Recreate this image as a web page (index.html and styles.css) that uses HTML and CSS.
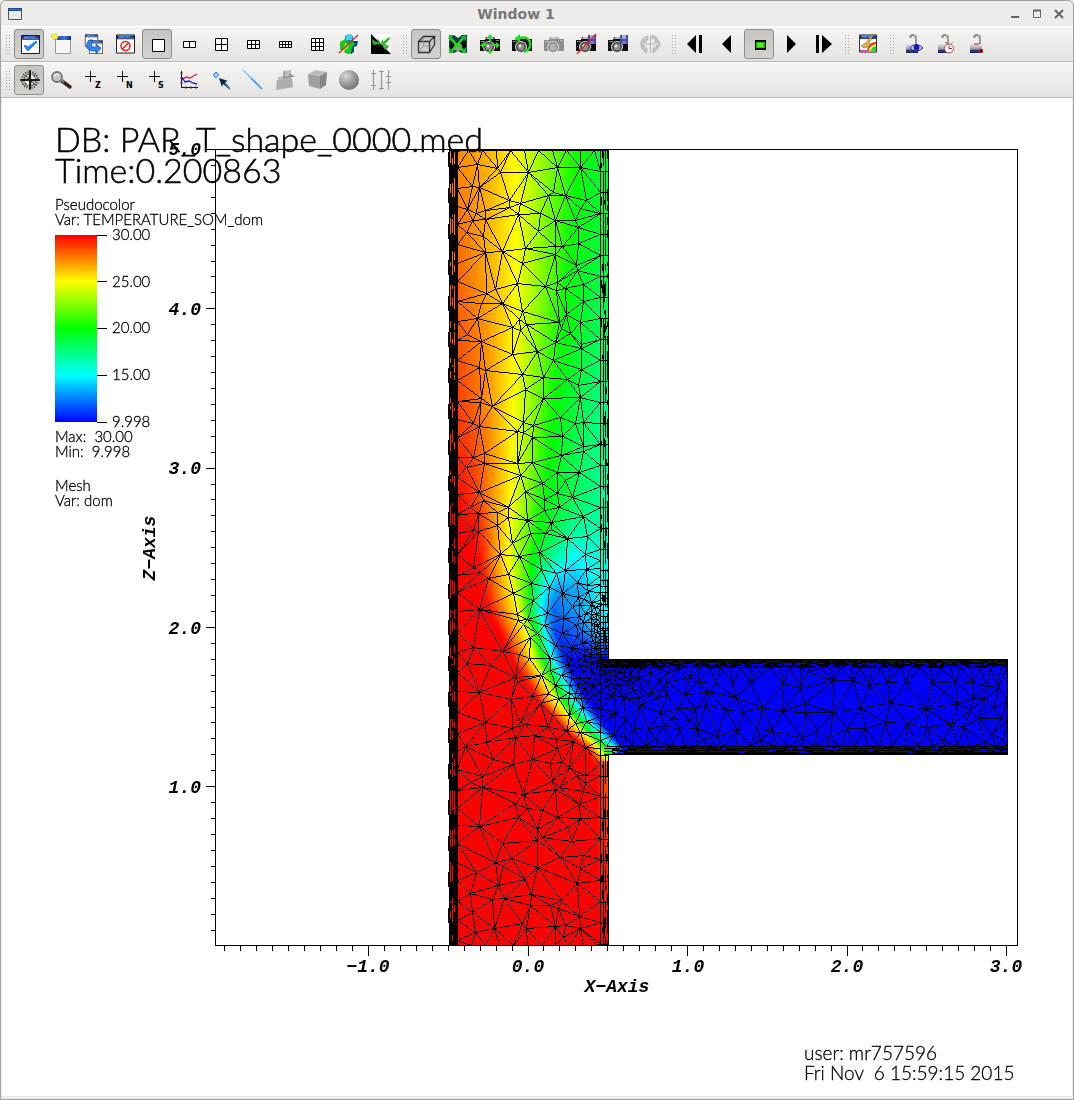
FILE: index.html
```html
<!DOCTYPE html>
<html lang="en">
<head>
<meta charset="utf-8">
<meta name="viewport" content="width=device-width, initial-scale=1">
<title>Window 1</title>
<link rel="stylesheet" href="styles.css">
</head>
<body>
<svg class="defs" aria-hidden="true">
  <defs>
    <linearGradient id="bar" x1="0" x2="1" y1="0" y2="0"><stop offset="0" stop-color="#0a2a8c"/><stop offset=".6" stop-color="#3a7af0"/><stop offset="1" stop-color="#0a2a8c"/></linearGradient>
    <radialGradient id="ball" cx=".35" cy=".3" r=".75"><stop offset="0" stop-color="#d8d8d8"/><stop offset=".5" stop-color="#a0a0a0"/><stop offset="1" stop-color="#707070"/></radialGradient>
    <linearGradient id="lockfill" x1="0" x2="0" y1="0" y2="1"><stop offset="0" stop-color="#e4e4e4"/><stop offset=".55" stop-color="#9a9aa6"/><stop offset=".7" stop-color="#2c3c86"/><stop offset="1" stop-color="#16246a"/></linearGradient>
    <linearGradient id="legend" x1="0" x2="0" y1="0" y2="1"><stop offset="0" stop-color="#f00"/><stop offset=".25" stop-color="#ff0"/><stop offset=".5" stop-color="#0f0"/><stop offset=".75" stop-color="#0ff"/><stop offset="1" stop-color="#00f"/></linearGradient>
    <symbol id="win" viewBox="0 0 20 20"><path d="M.5.5h19v19H.5z" fill="#fff" stroke="#111"/><path d="M1 1h18v3H1z" fill="url(#bar)"/><path d="M1 4.5h18" stroke="#222"/><path d="M3 2.5h5" stroke="#9ab8f8"/></symbol>
    <symbol id="camera" viewBox="0 0 24 24"><path d="M2 8h5l1-3h8l1 2h5v12H2z" fill="#0c0c0c"/><path d="M9 5h6l1 2H8z" fill="#bbb"/><path d="M3 9.500h4M18 8.500h3" stroke="#8a8a8a"/><circle cx="11" cy="15" r="6" fill="#ddd"/><circle cx="11" cy="15" r="5" fill="#444"/><circle cx="11" cy="15" r="3.500" fill="#8a8a8a"/><circle cx="10" cy="14" r="1.500" fill="#e8e8e8"/></symbol>
    <symbol id="graycam" viewBox="0 0 24 24"><path d="M2 8h5l1-3h8l1 2h5v12H2z" fill="#8f8f8f"/><path d="M9 5h6l1 2H8z" fill="#c4c4c4"/><path d="M3 9.500h4M18 8.500h3" stroke="#bdbdbd"/><circle cx="11" cy="15" r="6" fill="#ddd"/><circle cx="11" cy="15" r="5" fill="#8a8a8a"/><circle cx="11" cy="15" r="3.500" fill="#b4b4b4"/></symbol>
    <symbol id="disk" viewBox="0 0 8 9"><path d="M0 0h8v9H0z" fill="#4a4aa8"/><path d="M2 0h4v4H2z" fill="#a8a8e8"/><path d="M2 6h4v3H2z" fill="#7878c8"/></symbol>
    <symbol id="lock" viewBox="0 0 24 24"><path d="M5 12h12v9H5z" fill="url(#lockfill)"/><path d="M9 6c1-4 6-4 6 1v5" fill="none" stroke="#666" stroke-width="2"/><path d="M9 6c1-4 6-4 6 1v5" fill="none" stroke="#ccc"/></symbol>
    <symbol id="cross" viewBox="0 0 24 24"><path d="M9.500 3v11M4 8.500h11" stroke="#111" stroke-width="1" fill="none"/></symbol>
  </defs>
</svg>

<header class="titlebar">
  <svg class="app-icon" viewBox="0 0 14 12"><path d="M.5.5h13v11H.5z" fill="#e6eaea" stroke="#555"/><path d="M0 0h14v3H0z" fill="#204a87"/><path d="M1 1.500h12" stroke="#3d76c4"/></svg>
  <h1 class="title">Window 1</h1>
  <div class="window-controls">
    <button aria-label="Minimize"><svg viewBox="0 0 10 10"><path d="M1 8h8" stroke="#666" stroke-width="2"/></svg></button>
    <button aria-label="Maximize"><svg viewBox="0 0 10 10"><path d="M1.500 1.500h7v7h-7z" fill="none" stroke="#666"/><path d="M1 1.500h8" stroke="#666" stroke-width="2"/></svg></button>
    <button aria-label="Close"><svg viewBox="0 0 10 10"><path d="M1 1l8 8M9 1L1 9" stroke="#666" stroke-width="2"/></svg></button>
  </div>
</header>

<nav class="toolbar" aria-label="Window tools">
  <span class="grip"></span>
  <button class="tool on" aria-label="Active window"><svg viewBox="0 0 24 24"><use href="#win" x="4" y="2" width="19" height="21"/><path d="M7 14l4 5 9-9-1-1-8 6-3-2z" fill="#1f87ff" stroke="#1f87ff"/></svg></button>
  <button class="tool" aria-label="New window"><svg viewBox="0 0 24 24"><path d="M6.500 4.500h15v17h-15z" fill="#f6f6f6" stroke="#999"/><path d="M6 4h16v4H6z" fill="url(#bar)"/><path d="M3 2l2 1 2-2 1 3 2 1-2 1 0 2-2-1-2 1 0-2-2-1z" fill="#f2f230" stroke="#c8c83a" stroke-width=".5"/></svg></button>
  <button class="tool" aria-label="Clone window"><svg viewBox="0 0 24 24"><use href="#win" x="3" y="2" width="15" height="13"/><use href="#win" x="8" y="8" width="14" height="14"/><path d="M8 8c-5 6-2 12 7 11v3l5-6-5-4v3c-4 1-6-2-3-7z" fill="#2f86ea" stroke="#0a3c98" stroke-width=".7"/></svg></button>
  <button class="tool" aria-label="Delete window"><svg viewBox="0 0 24 24"><use href="#win" x="3" y="2" width="19" height="20"/><circle cx="12.500" cy="14" r="4.500" fill="none" stroke="#f01818" stroke-width="1.500"/><path d="M9.500 17l6-6" stroke="#f01818" stroke-width="1.500"/></svg></button>
  <button class="tool on" aria-label="Layout 1x1"><svg viewBox="0 0 24 24"><path d="M7.500 7.500h12v12h-12z" fill="#fff" stroke="#000"/></svg></button>
  <button class="tool" aria-label="Layout 1x2"><svg viewBox="0 0 24 24"><path d="M6.500 9.500h12v6h-12zM12.500 9v7" fill="#fff" stroke="#000"/></svg></button>
  <button class="tool" aria-label="Layout 2x2"><svg viewBox="0 0 24 24"><path d="M6.500 6.500h12v12h-12zM12.500 6v13M6 12.500h13" fill="#fff" stroke="#000"/></svg></button>
  <button class="tool" aria-label="Layout 2x3"><svg viewBox="0 0 24 24"><path d="M6.500 8.500h12v8h-12zM10.500 8v9M14.500 8v9M6 12.500h13" fill="#fff" stroke="#000"/></svg></button>
  <button class="tool" aria-label="Layout 2x4"><svg viewBox="0 0 24 24"><path d="M6.500 9.500h12v6h-12zM9.500 9v7M12.500 9v7M15.500 9v7M6 12.500h13" fill="#fff" stroke="#000"/></svg></button>
  <button class="tool" aria-label="Layout 3x3"><svg viewBox="0 0 24 24"><path d="M6.500 6.500h12v12h-12zM10.500 6v13M14.500 6v13M6 10.500h13M6 14.500h13" fill="#fff" stroke="#000"/></svg></button>
  <button class="tool" aria-label="Clear plots"><svg viewBox="0 0 24 24"><path d="M8 4q5-3 8 0v8H8z" fill="#1a8ad8"/><path d="M9 3q4-2 6 0v5H9z" fill="#3fd0ee"/><path d="M12 9h9l-1 5-3 1v5l-3 2-4-2z" fill="#084a80"/><path d="M3 10l5-3 3 3 4-1 3 3-3 3-1 6-4 1-3-2 1-3-5 1z" fill="#18c818"/><path d="M8 11l4 2-2 5-3-2z" fill="#6cf05c"/><path d="M2 21L21 3" stroke="#d82010" stroke-width="1.200"/></svg></button>
  <button class="tool" aria-label="Invert background"><svg viewBox="0 0 24 24"><path d="M2 2h20v20H2z" fill="#fff"/><path d="M2 2v20h20z" fill="#000"/><path d="M8 3v3l2 2 1 2-4 0-4-3 1 6 5-1 2 2-3-8zM20 5l-6 5v-3l-2 3 1 4 5 0-2-2 5-5zM14 15l6-2-1 3-3 2z" fill="#2cb81c"/></svg></button>
  <span class="grip"></span>
  <button class="tool on" aria-label="Perspective"><svg viewBox="0 0 24 24"><path d="M4.500 9.500h11v11h-11zM4.500 9.500l5-5h11l-5 5M20.500 4.500v8l-5 8" fill="none" stroke="#333" stroke-width="1.300"/><path d="M9.500 5v9h8M9.500 14l-5 6" fill="none" stroke="#888" stroke-width=".7"/></svg></button>
  <button class="tool" aria-label="Reset view"><svg viewBox="0 0 24 24"><path d="M3 3h5l4 3 4-3h5v18h-5l-4-2-4 2H3z" fill="#0e3f50"/><path d="M4 9h16v9H4z" fill="#111"/><circle cx="12" cy="15" r="4" fill="#999"/><path d="M3 5l8 8 8-9M4 21l7-8 8 7" fill="none" stroke="#20d820" stroke-width="2.500"/><path d="M3 3h5L3 9zM20 4h-5l5 5zM3 21v-6l5 6zM20 21h-5l5-6z" fill="#18b828"/></svg></button>
  <button class="tool" aria-label="Recenter view"><svg viewBox="0 0 24 24"><use href="#camera" width="24" height="24"/><path d="M12 2l3 4h-2v3h-2V6H9zM12 22l3-3h-2v-2h-2v2H9zM2 13l4-3v2h3v2H6v3zM22 13l-4-3v2h-4v2h4v3z" fill="#20e020"/></svg></button>
  <button class="tool" aria-label="Undo view"><svg viewBox="0 0 24 24"><use href="#camera" width="24" height="24"/><path d="M10 6c8-2 11 3 10 8-1 4-3 5-6 6" fill="none" stroke="#20d820" stroke-width="2.500"/><path d="M4 7l6-5v8z" fill="#20e020"/></svg></button>
  <button class="tool" aria-label="Redo view" disabled><svg viewBox="0 0 24 24"><use href="#graycam" width="24" height="24"/></svg></button>
  <button class="tool" aria-label="Remove saved views"><svg viewBox="0 0 24 24"><use href="#camera" width="24" height="24"/><use href="#disk" x="14" y="3" width="8" height="9"/><path d="M3 22L22 2" stroke="#e02020" stroke-width="1.300"/></svg></button>
  <button class="tool" aria-label="Save view"><svg viewBox="0 0 24 24"><use href="#camera" width="24" height="24"/><use href="#disk" x="14" y="3" width="8" height="9"/></svg></button>
  <button class="tool" aria-label="Choose centre of rotation" disabled><svg viewBox="0 0 24 24"><path d="M10 4C0 6 1 18 9 21v-5H7v-3H4v-2h4V8h2zM14 3c9 2 10 13 1 18v-5h3v-3h4v-2h-5V7h-3z" fill="#c2c2c2" stroke="#aaa" stroke-width=".6"/><path d="M12.500 3v18M8 12h9" stroke="#b4b4b4"/></svg></button>
  <span class="grip"></span>
  <button class="tool" aria-label="Previous frame"><svg viewBox="0 0 24 24"><path d="M13 3v18L4 12zM16 3h3v18h-3z"/></svg></button>
  <button class="tool" aria-label="Reverse play"><svg viewBox="0 0 24 24"><path d="M16 3v18L7 12z"/></svg></button>
  <button class="tool on" aria-label="Stop"><svg viewBox="0 0 24 24"><path d="M8 8h11v10H8z"/><path d="M9 10h9v6H9z" fill="#20c800"/><path d="M11 11h5v4h-5z" fill="#50ff20"/></svg></button>
  <button class="tool" aria-label="Play"><svg viewBox="0 0 24 24"><path d="M8 3v18l9-9z"/></svg></button>
  <button class="tool" aria-label="Next frame"><svg viewBox="0 0 24 24"><path d="M5 3h3v18H5zM11 3v18l10-9z"/></svg></button>
  <span class="grip"></span>
  <button class="tool" aria-label="Choose tool"><svg viewBox="0 0 24 24"><use href="#win" x="3" y="2" width="18" height="19"/><path d="M20 10c-5 0-8 3-9 9h2c0-4 3-6 7-7z" fill="#f03030"/><path d="M20 12c-4 1-7 3-7 7h2c0-3 2-4 5-5z" fill="#f0e820"/><path d="M20 14c-3 1-5 2-5 5h5z" fill="#20d850"/><path d="M4 18h7v2H4z" fill="#e040e0"/><path d="M16 2l1 1-4 8 1 3-6 2-3-2 6-4z" fill="#e0b850" stroke="#7a5a18" stroke-width=".6"/></svg></button>
  <span class="grip"></span>
  <button class="tool" aria-label="Lock view"><svg viewBox="0 0 24 24"><use href="#lock" width="24" height="24"/><path d="M9 16q6-7 13 0-7 6-13 0z" fill="#e8e8ff" stroke="#1818a0"/><circle cx="15.500" cy="15.500" r="3" fill="#1818b8"/></svg></button>
  <button class="tool" aria-label="Lock time"><svg viewBox="0 0 24 24"><use href="#lock" width="24" height="24"/><circle cx="16" cy="16.500" r="4.500" fill="#fff" stroke="#c04040"/><path d="M16 13.500v3h3M12.500 10.500l2 1M19.500 10.500l-1 1" stroke="#b02020" fill="none"/></svg></button>
  <button class="tool" aria-label="Lock tools"><svg viewBox="0 0 24 24"><use href="#lock" width="24" height="24"/><path d="M9 11h5v2H9z" fill="#e07080"/><path d="M14.500 17.500h3v3h-3z" fill="#400" stroke="#e01818"/></svg></button>
</nav>

<nav class="toolbar" aria-label="Interaction modes">
  <span class="grip"></span>
  <button class="tool on" aria-label="Navigate"><svg viewBox="0 0 24 24"><circle cx="13" cy="12" r="8" fill="none" stroke="#222" stroke-width="2" stroke-dasharray="1 1.500"/><circle cx="13" cy="12" r="6" fill="#d8d4c8" stroke="#444"/><path d="M13 2l1 9 9 1-9 1-1 9-1-9-9-1 9-1z" fill="#111" stroke="#111"/><path d="M8 7l10 10M18 7L8 17" stroke="#333" stroke-width=".8"/><path d="M14 6v5h5zM12 18v-5H7z" fill="#f0ece0"/></svg></button>
  <button class="tool" aria-label="Zoom"><svg viewBox="0 0 24 24"><path d="M13 13l8 6" stroke="#3a2420" stroke-width="3.500" stroke-linecap="round"/><path d="M12 12l3 2" stroke="#888" stroke-width="2"/><circle cx="8" cy="9" r="5" fill="#c8c8c8" stroke="#777" stroke-width="1.800"/><path d="M5 8q2-3 5-1" stroke="#fff" fill="none"/></svg></button>
  <button class="tool" aria-label="Zone pick"><svg viewBox="0 0 24 24"><use href="#cross" width="24" height="24"/><text class="glyph" x="14" y="20">Z</text></svg></button>
  <button class="tool" aria-label="Node pick"><svg viewBox="0 0 24 24"><use href="#cross" width="24" height="24"/><text class="glyph" x="13" y="20">N</text></svg></button>
  <button class="tool" aria-label="Spreadsheet pick"><svg viewBox="0 0 24 24"><use href="#cross" width="24" height="24"/><text class="glyph" x="13" y="20">S</text></svg></button>
  <button class="tool" aria-label="Lineout"><svg viewBox="0 0 24 24"><path d="M4.500 3v16.500H21" fill="none" stroke="#111"/><path d="M3 5h3M3 10h3M3 15h3M9 18v3M14 18v3M19 18v3" stroke="#555"/><path d="M5 12l4-3 4 1 7-4" fill="none" stroke="#e82030" stroke-width="1.300"/><path d="M5 9l3 5 4-1 4 2 4 1" fill="none" stroke="#1818d0" stroke-width="1.300"/></svg></button>
  <button class="tool" aria-label="Point tool"><svg viewBox="0 0 24 24"><path d="M7 4l3 3-3 3-3-3z" fill="#9cc8ff" stroke="#2a80e8"/><path d="M10 10l9 3-3 1 5 6-1 1-6-5-1 3z" fill="#0c2440"/><path d="M16 15l5 6" stroke="#3a90d8" stroke-width="1.500"/></svg></button>
  <button class="tool" aria-label="Line tool"><svg viewBox="0 0 24 24"><path d="M2 2l19 19" stroke="#8cc4ff" stroke-width="1.600"/><path d="M10 10l11 11" stroke="#48a0f0" stroke-width="1.600"/></svg></button>
  <button class="tool" aria-label="Plane tool" disabled><svg viewBox="0 0 24 24"><path d="M5 9l6-1V3l7-1v8l2 9-17 3z" fill="#bdbdbd"/><path d="M4 12l15-2 1 9-17 3z" fill="#aeaeae"/><path d="M11 3v7l9-2-4-2" fill="none" stroke="#8a8a8a" stroke-width="1.300"/></svg></button>
  <button class="tool" aria-label="Box tool" disabled><svg viewBox="0 0 24 24"><path d="M3 6l8-4 11 2-6 4z" fill="#bcbcbc"/><path d="M3 6l12 2v13L4 18z" fill="#a0a0a0"/><path d="M15 8l7-4-1 13-6 4z" fill="#868686"/></svg></button>
  <button class="tool" aria-label="Sphere tool" disabled><svg viewBox="0 0 24 24"><circle cx="12" cy="12" r="10" fill="url(#ball)"/></svg></button>
  <button class="tool" aria-label="Axis restriction tool" disabled><svg viewBox="0 0 24 24"><path d="M4.500 2v20M12.500 2v20M19.500 2v20M2 5.500h5M10 3.500h5M17 8.500h5M2 17.500h5M10 20.500h5M17 14.500h5" stroke="#999" stroke-width="1.200"/></svg></button>
</nav>

<main class="viewport">
  <canvas class="layer field" id="field" width="1070" height="998"></canvas>
  <svg class="layer" viewBox="2 98 1070 998" role="img" aria-label="Temperature plot of the T-shaped pipe">
    <path class="axis" d="M215.500 149.500H1017.500V945.500H215.500z"/>
    <path class="axis" id="ticks"/>
    <g class="axis-label end">
      <text x="201" y="155">5.0</text><text x="201" y="315">4.0</text><text x="201" y="474">3.0</text><text x="201" y="634">2.0</text><text x="201" y="793">1.0</text>
    </g>
    <g class="axis-label mid">
      <text x="368" y="972">−1.0</text><text x="528" y="972">0.0</text><text x="688" y="972">1.0</text><text x="847" y="972">2.0</text><text x="1006" y="972">3.0</text>
      <text x="617" y="992">X−Axis</text>
      <text transform="translate(155 548) rotate(-90)">Z−Axis</text>
    </g>
    <g class="heading"><text x="55" y="152">DB: PAR_T_shape_0000.med</text><text x="55" y="183">Time:0.200863</text></g>
    <g class="note">
      <text x="55" y="210">Pseudocolor</text><text x="55" y="225">Var: TEMPERATURE_SOM_dom</text>
      <text x="112" y="240">30.00</text><text x="112" y="287">25.00</text><text x="112" y="333">20.00</text><text x="112" y="380">15.00</text><text x="112" y="427">9.998</text>
      <text x="55" y="442">Max:  30.00</text><text x="55" y="457">Min:  9.998</text>
      <text x="55" y="491">Mesh</text><text x="55" y="506">Var: dom</text>
    </g>
    <rect x="55" y="235" width="42" height="187" fill="url(#legend)"/>
    <path class="axis" d="M97 235.500h10M97 281.500h10M97 328.500h10M97 375.500h10M97 422.500h10"/>
    <g class="credit"><text x="804" y="1060">user: mr757596</text><text x="804" y="1080">Fri Nov  6 15:59:15 2015</text></g>
  </svg>
</main>
<script src="plot.js"></script>
</body>
</html>
```

FILE: styles.css
```css
* { box-sizing: border-box; }
html { background: #edeceb; }
body {
  margin: 0;
  min-height: 100vh;
  display: flex;
  flex-direction: column;
  border: 1px solid #a3a19e;
  border-radius: 6px 6px 0 0;
  background: #edeceb;
  font-family: "DejaVu Sans", sans-serif;
}
.defs { position: absolute; width: 0; height: 0; }
button { padding: 0; border: 0; background: none; font: inherit; }
svg { display: block; }

.titlebar {
  display: flex;
  align-items: center;
  height: 25px;
  padding: 0 9px 0 7px;
}
.app-icon { width: 14px; height: 12px; }
.title { flex: 1; margin: 0; color: #777; font-size: 14px; line-height: 16px; font-weight: bold; text-align: center; }
.window-controls { display: flex; gap: 12px; }
.window-controls svg { width: 10px; height: 10px; }

.toolbar {
  display: flex;
  gap: 2px;
  height: 36px;
  padding: 3px 0;
  border-top: 1px solid #fff;
  border-bottom: 1px solid #bbb9b6;
  background: linear-gradient(#f5f5f4, #e4e3e1);
  align-items: center;
}
.grip {
  flex: none;
  width: 11px;
  height: 19px;
  padding: 0 1px 0 5px;
  background: conic-gradient(from 270deg at 1px 1px, #a8a6a2 90deg, transparent 0) 0 0 / 3px 3px;
  background-clip: content-box;
  background-origin: content-box;
}
.tool {
  flex: none;
  display: grid;
  place-items: center;
  width: 30px;
  height: 30px;
  border: 1px solid transparent;
  border-radius: 3px;
}
.tool.on { border-color: #8f8c88; background: linear-gradient(#c6c4c0, #d3d1ce); }
.tool svg { width: 24px; height: 24px; }
.glyph { font: bold 8px "DejaVu Sans", sans-serif; }

.viewport { display: grid; margin: 0 1px 3px; background: #fff; }
.layer { grid-area: 1 / 1; width: 100%; height: auto; }
.field { image-rendering: pixelated; }
.axis { fill: none; stroke: #000; shape-rendering: crispEdges; }
.axis-label { font: italic bold 18px "Liberation Mono", monospace; }
.end { text-anchor: end; }
.mid { text-anchor: middle; }
.heading, .note, .credit { font-family: Lato, sans-serif; font-weight: 300; stroke: #000; }
.heading text, .note text, .credit text { white-space: pre; }
.heading { font-size: 34px; stroke-width: 0.5; }
.note { font-size: 15px; stroke-width: 0.3; }
.credit { font-size: 19px; stroke-width: 0.3; }
```

FILE: plot.js
```js
// Axis ticks
(function () {
  let d = '';
  for (let k = -19; k <= 30; k++) {
    const x = Math.floor(528 + k * 15.95) + 0.5;
    d += `M${x} 946v${k % 10 ? 5 : 10}`;
  }
  for (let k = 0; k < 50; k++) {
    const y = Math.floor(149.5 + k * 15.93) + 0.5;
    d += `M215 ${y}h${k % 10 ? -4 : -9}`;
  }
  document.getElementById('ticks').setAttribute('d', d);
})();

// Temperature contours: y, then x / temperature pairs
const ROWS = [
  [150, 457, 27.3, 490, 26.4, 515, 25, 580, 20, 600, 19.3],
  [260, 457, 28, 487, 26.6, 515, 25, 570, 20, 600, 18.8],
  [400, 457, 28.8, 480, 27.7, 513, 25, 555, 20, 600, 17.4],
  [500, 460, 29.8, 478, 28.6, 511, 25, 543, 20, 600, 17],
  [530, 475, 30, 485, 28.4, 508, 25, 539, 20, 573, 16.8, 600, 16.6],
  [560, 478, 30, 490, 27.8, 508, 25, 531, 20, 553, 16.6, 573, 14.8, 600, 15.8],
  [590, 483, 30, 500, 27, 512, 25, 530, 20, 543, 15, 557, 13, 580, 13.4, 600, 15.2],
  [610, 488, 30, 505, 27, 518, 25, 528, 20, 540, 15, 553, 12, 573, 13, 600, 15],
  [633, 500, 30, 515, 27, 526, 25, 536, 20, 545, 15, 555, 11.2, 580, 12, 600, 14.4],
  [660, 512, 30, 523, 27.5, 532, 25, 543, 20, 553, 15, 565, 10.2, 600, 10],
  [700, 538, 30, 547, 27, 555, 25, 563, 20, 573, 15, 587, 10, 608, 10],
  [730, 565, 30, 573, 27, 580, 25, 587, 20, 597, 15, 608, 10, 620, 10],
  [745, 582, 30, 590, 27, 595, 25, 603, 20, 612, 15, 622, 10, 630, 10],
  [754, 590, 30, 597, 27, 602, 25, 609, 20, 614, 15, 621, 10, 630, 10],
  [764, 596, 30, 602, 29, 610, 28],
  [946, 457, 30, 608, 30]
];

function rowTemp(row, x) {
  if (x <= row[1]) return row[2];
  for (let i = 3; i < row.length; i += 2) {
    if (x <= row[i]) {
      const f = (x - row[i - 2]) / (row[i] - row[i - 2]);
      return row[i - 1] + f * (row[i + 1] - row[i - 1]);
    }
  }
  return row[row.length - 1];
}

// Inverse of a row: x position of a temperature on the falling part
function rowX(row, t) {
  for (let i = 3; i < row.length; i += 2) {
    if (t <= row[i - 1] && t >= row[i + 1]) {
      return row[i - 2] + (row[i - 1] - t) / (row[i - 1] - row[i + 1]) * (row[i] - row[i - 2]);
    }
  }
  return null;
}

function temperature(x, y) {
  if (x > 626) return 10;
  let i = 0;
  while (i < ROWS.length - 2 && ROWS[i + 1][0] <= y) i++;
  const a = ROWS[i], b = ROWS[i + 1];
  const f = (y - a[0]) / (b[0] - a[0]);
  // Follow the slanted mixing layer by shifting each row along it
  const xa = rowX(a, 20), xb = rowX(b, 20);
  if (xa !== null && xb !== null) {
    const shift = xb - xa;
    return (1 - f) * rowTemp(a, x - f * shift) + f * rowTemp(b, x + (1 - f) * shift);
  }
  return (1 - f) * rowTemp(a, x) + f * rowTemp(b, x);
}

function colour(t) {
  const s = Math.max(0, Math.min(4, (t - 10) / 5));
  const k = Math.min(3, Math.floor(s)), f = Math.round((s - k) * 255);
  return [[0, f, 255], [0, 255, 255 - f], [f, 255, 0], [255, 255 - f, 0]][k];
}

// Mesh nodes of the vertical pipe and of the side branch
const PIPE = [
  477,164,497,168,500,172,528,172,557,167,580,167,472,186,479,187,553,192,548,195,565,195,586,200,509,200,520,203,509,207,518,214,467,209,476,213,485,210,540,213,580,208,472,220,485,219,555,220,575,220,538,231,466,232,483,236,578,227,555,246,562,246,578,243,525,248,502,251,485,252,555,254,522,263,576,265,577,270,557,282,583,284,517,283,545,286,495,289,486,293,565,288,556,290,583,301,481,303,502,303,522,311,566,314,477,318,519,319,526,324,520,330,559,322,580,322,512,327,561,328,570,333,467,334,481,341,555,342,581,344,581,348,537,351,512,354,553,360,479,367,485,370,581,369,522,374,543,377,567,379,578,385,525,389,543,398,481,398,580,397,
  480,402,492,406,560,417,575,423,583,422,479,426,473,423,533,425,523,422,517,431,523,432,532,437,562,436,583,446,583,451,484,453,561,455,484,463,473,457,532,462,517,463,579,472,557,472,466,467,520,475,565,480,542,483,479,492,525,491,557,493,483,500,544,499,572,497,508,507,470,507,559,507,544,510,527,520,508,517,497,512,583,516,478,513,551,522,473,530,478,531,497,525,551,529,530,533,545,533,567,538,587,536,512,543,539,552,500,554,519,556,585,554,565,570,586,569,473,567,480,572,488,578,508,574,541,569,531,583,556,573,577,582,587,585,549,587,513,593,562,593,533,600,584,599,591,602,479,609,572,606,547,613,585,613,517,614,563,618,518,620,527,619,544,625,583,622,523,624,537,633,562,633,577,636,530,637,473,647,502,651,555,645,571,647,529,658,519,654,566,655,550,658,
  467,663,490,665,515,677,541,675,561,675,517,681,479,692,555,685,511,699,532,696,540,703,558,698,582,707,552,715,569,715,485,722,520,722,525,724,512,728,515,737,534,735,556,739,575,723,580,732,486,742,465,746,585,747,557,748,573,741,493,759,532,759,513,764,562,762,569,767,550,763,585,775,577,775,482,776,552,781,470,782,482,787,555,789,559,787,585,783,583,791,523,794,515,803,527,808,542,810,579,804,518,817,557,817,580,818,479,826,537,829,568,827,542,837,537,840,571,841,502,843,511,858,583,855,495,862,560,857,537,867,580,868,476,872,503,866,525,879,577,883,498,885,470,893,492,899,504,898,531,894,561,900,530,905,550,905,558,908,579,916,472,912,522,923,526,928,494,928,555,926,565,925,475,932,563,937,580,928
];
const BRANCH = [
  660,712,725,709,743,712,762,707,782,711,805,703,805,712,833,712,860,708,890,702,926,709,957,703,715,683,732,683,750,683,783,683,800,688,833,680,853,680,869,686,887,682,906,683,932,683,955,681,973,682,998,687,1007,700,717,736,737,729,757,729,772,730,802,738,817,730,847,728,865,728,885,722,907,723,927,727,943,739,963,727,992,733,978,718,985,698,970,710,680,729,697,728,625,719,648,729,633,728,695,708,667,695,650,693,632,682,615,688,650,673,667,673,690,677,697,682,807,672,1001,718,1003,740,985,742,829,738,760,739,702,739,690,720,672,718,640,705,655,738,706,704,735,697
];

let seed = 7;
function random() {
  seed = (seed * 16807) % 2147483647;
  return seed / 2147483647;
}

function toPoints(flat) {
  const pts = [];
  for (let i = 0; i < flat.length; i += 2) pts.push([flat[i], flat[i + 1]]);
  return pts;
}

function scatter(pts, n, x0, x1, y0, y1, minimum) {
  for (let i = 0; i < n; i++) {
    const x = x0 + random() * (x1 - x0), y = y0 + random() * (y1 - y0);
    if (pts.every(p => Math.hypot(p[0] - x, p[1] - y) > minimum)) pts.push([x, y]);
  }
}

// Bowyer-Watson triangulation; returns the list of edges
function triangulate(pts) {
  const p = pts.map(q => [q[0] + random() * 0.02, q[1] + random() * 0.02]);
  const n = p.length;
  p.push([-9000, -9000], [10000, -9000], [500, 20000]);
  const make = (a, b, c) => {
    const [ax, ay] = p[a], [bx, by] = p[b], [cx, cy] = p[c];
    const d = 2 * (ax * (by - cy) + bx * (cy - ay) + cx * (ay - by));
    const A = ax * ax + ay * ay, B = bx * bx + by * by, C = cx * cx + cy * cy;
    const x = (A * (by - cy) + B * (cy - ay) + C * (ay - by)) / d;
    const y = (A * (cx - bx) + B * (ax - cx) + C * (bx - ax)) / d;
    return { v: [a, b, c], x, y, r: (ax - x) ** 2 + (ay - y) ** 2 };
  };
  let tris = [make(n, n + 1, n + 2)];
  for (let i = 0; i < n; i++) {
    const edges = new Map();
    tris = tris.filter(t => {
      if ((p[i][0] - t.x) ** 2 + (p[i][1] - t.y) ** 2 >= t.r) return true;
      for (let e = 0; e < 3; e++) {
        const a = t.v[e], b = t.v[(e + 1) % 3];
        const key = Math.min(a, b) + ',' + Math.max(a, b);
        edges.has(key) ? edges.delete(key) : edges.set(key, [a, b]);
      }
      return false;
    });
    for (const [a, b] of edges.values()) tris.push(make(a, b, i));
  }
  const out = new Map();
  for (const t of tris) {
    for (let e = 0; e < 3; e++) {
      const a = t.v[e], b = t.v[(e + 1) % 3];
      if (a < n && b < n) out.set(Math.min(a, b) + ',' + Math.max(a, b), [pts[a], pts[b]]);
    }
  }
  return [...out.values()];
}

(function () {
  const canvas = document.getElementById('field');
  const ctx = canvas.getContext('2d');
  const W = canvas.width, H = canvas.height, OX = 2, OY = 98;
  const image = ctx.createImageData(W, H);
  const put = (x, y, c) => {
    const i = ((y - OY) * W + (x - OX)) * 4;
    image.data[i] = c[0]; image.data[i + 1] = c[1]; image.data[i + 2] = c[2]; image.data[i + 3] = 255;
  };
  const BLACK = [0, 0, 0];
  const line = (a, b) => {
    const dx = b[0] - a[0], dy = b[1] - a[1];
    const n = Math.max(1, Math.ceil(Math.max(Math.abs(dx), Math.abs(dy))));
    for (let i = 0; i <= n; i++) put(Math.round(a[0] + dx * i / n), Math.round(a[1] + dy * i / n), BLACK);
  };

  // Colour fill
  for (let y = 150; y < 946; y++) for (let x = 449; x < 609; x++) put(x, y, colour(temperature(x, y)));
  for (let y = 659; y < 754; y++) for (let x = 609; x < 1008; x++) put(x, y, colour(temperature(x, y)));

  // Vertical pipe
  const pipe = toPoints(PIPE);
  for (let y = 150; y <= 945; y += 17 + Math.floor(random() * 5)) pipe.push([457, y]);
  pipe.push([457, 945]);
  for (let y = 150; y < 560; y += 21) pipe.push([600, y]);
  for (let y = 560; y < 600; y += 8) pipe.push([600, y]);
  for (let y = 600; y < 668; y += 3) pipe.push([600, y]);
  for (let y = 668; y < 765; y += 8) pipe.push([600, y]);
  for (let y = 775; y < 945; y += 21) pipe.push([600, y]);
  for (let x = 468; x < 600; x += 14) pipe.push([x, 150], [x + 3, 945]);
  pipe.push([600, 945]);
  scatter(pipe, 300, 590, 600, 605, 668, 3);
  scatter(pipe, 120, 575, 600, 590, 668, 6);
  scatter(pipe, 250, 568, 600, 655, 700, 5);
  scatter(pipe, 60, 545, 600, 660, 745, 9);
  for (const [a, b] of triangulate(pipe)) line(a, b);

  // Side branch
  const branch = toPoints(BRANCH);
  for (let y = 668; y <= 740; y += 8) branch.push([600, y]);
  for (let x = 603; x < 640; x += 4) branch.push([x, 667]);
  for (let x = 640; x < 1008; x += 10) branch.push([x, 667]);
  for (let x = 606; x < 1008; x += 13) branch.push([x, 746]);
  branch.push([1007, 667], [1007, 746], [1007, 720]);
  scatter(branch, 400, 602, 630, 668, 686, 4);
  scatter(branch, 120, 602, 670, 668, 698, 7);
  scatter(branch, 70, 602, 710, 668, 744, 10);
  scatter(branch, 40, 945, 1006, 668, 744, 11);
  for (const [a, b] of triangulate(branch)) line(a, b);
  // Crowded nodes along the middle of the branch
  const hub = [[660, 712], [743, 712], [782, 711], [833, 712], [860, 708], [890, 702], [926, 709], [957, 703]];
  for (const [x, y] of hub) {
    for (let k = -1; k <= 1; k++) line([x - 1, y + k], [x + 1, y + k]);
  }

  // Wall layers: thin cells that show as broken streaks
  for (let x = 449; x < 457; x++) {
    let y = 150;
    while (y < 946) {
      const run = 2 + Math.floor(random() * 7);
      const open = (y + 3) % 36 < 20 && (x === 450 || x === 452 || x === 454) && random() < 0.65;
      for (let k = 0; k < run && y < 946; k++, y++) if (!open) put(x, y, BLACK);
    }
  }
  for (let y = 152; y < 940; y += 36) line([448, y], [448, y + 14]);
  const wall = (y0, y1, gap) => {
    for (let x = 600; x < 609; x++) {
      let y = y0;
      while (y < y1) {
        const run = 3 + Math.floor(random() * 8);
        const solid = x === 600 || x === 608 || ((x === 603 || x === 605) ? random() < 0.85 : x === 607 ? random() < 0.5 : random() < 0.12);
        for (let k = 0; k < run && y < y1; k++, y++) if (solid) put(x, y, BLACK);
      }
    }
    for (let y = y0; y < y1; y += gap) line([600, y], [608, y]);
  };
  wall(150, 580, 21);
  wall(580, 630, 6);
  wall(630, 659, 3);
  wall(755, 946, 21);
  for (let y = 659; y < 668; y++) {
    let x = 600;
    while (x < 1008) {
      const run = 1 + Math.floor(random() * 4);
      const open = y > 660 && y < 667 && y % 3 !== 2 && random() < (x < 660 ? 0.12 : 0.38);
      for (let k = 0; k < run && x < 1008; k++, x++) if (!open) put(x, y, BLACK);
    }
  }
  for (let y = 746; y < 755; y++) {
    let x = 612;
    while (x < 1008) {
      const run = 2 + Math.floor(random() * 7);
      const solid = y === 746 || y === 754 || y === 753 || (y % 2 === 0 ? random() < 0.85 : random() < 0.3);
      for (let k = 0; k < run && x < 1008; k++, x++) if (solid) put(x, y, BLACK);
      if (!solid && x < 1008) put(x, y, BLACK);
    }
  }
  for (let y = 748; y < 755; y += 3) line([604, y], [612, y]);
  line([449, 150], [608, 150]);
  line([1007, 659], [1007, 754]);
  ctx.putImageData(image, 0, 0);
})();
```
